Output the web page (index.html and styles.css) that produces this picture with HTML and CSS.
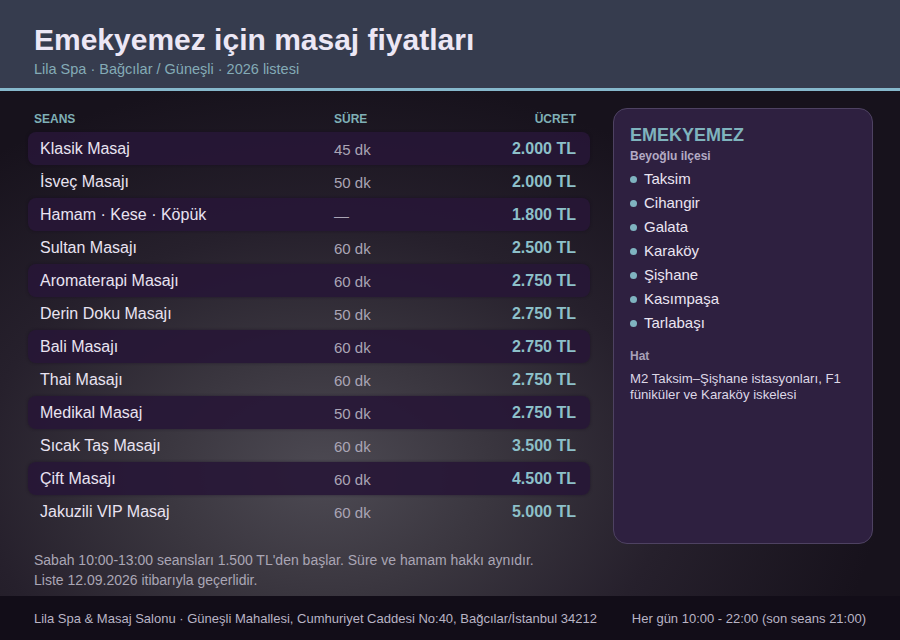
FILE: index.html
```html
<!DOCTYPE html>
<html lang="tr">
<head>
<meta charset="utf-8">
<title>Emekyemez için masaj fiyatları</title>
<link rel="stylesheet" href="styles.css">
</head>
<body>
<div class="page">
  <header class="top">
    <h1 class="title">Emekyemez için masaj fiyatları</h1>
    <div class="subtitle">Lila Spa · Bağcılar / Güneşli · 2026 listesi</div>
  </header>
  <main class="main">
    <section class="prices">
      <div class="thead">
        <span class="c-name">SEANS</span>
        <span class="c-dur">SÜRE</span>
        <span class="c-price">ÜCRET</span>
      </div>
      <div class="row alt"><span class="c-name">Klasik Masaj</span><span class="c-dur">45 dk</span><span class="c-price">2.000 TL</span></div>
      <div class="row"><span class="c-name">İsveç Masajı</span><span class="c-dur">50 dk</span><span class="c-price">2.000 TL</span></div>
      <div class="row alt"><span class="c-name">Hamam · Kese · Köpük</span><span class="c-dur">—</span><span class="c-price">1.800 TL</span></div>
      <div class="row"><span class="c-name">Sultan Masajı</span><span class="c-dur">60 dk</span><span class="c-price">2.500 TL</span></div>
      <div class="row alt"><span class="c-name">Aromaterapi Masajı</span><span class="c-dur">60 dk</span><span class="c-price">2.750 TL</span></div>
      <div class="row"><span class="c-name">Derin Doku Masajı</span><span class="c-dur">50 dk</span><span class="c-price">2.750 TL</span></div>
      <div class="row alt"><span class="c-name">Bali Masajı</span><span class="c-dur">60 dk</span><span class="c-price">2.750 TL</span></div>
      <div class="row"><span class="c-name">Thai Masajı</span><span class="c-dur">60 dk</span><span class="c-price">2.750 TL</span></div>
      <div class="row alt"><span class="c-name">Medikal Masaj</span><span class="c-dur">50 dk</span><span class="c-price">2.750 TL</span></div>
      <div class="row"><span class="c-name">Sıcak Taş Masajı</span><span class="c-dur">60 dk</span><span class="c-price">3.500 TL</span></div>
      <div class="row alt"><span class="c-name">Çift Masajı</span><span class="c-dur">60 dk</span><span class="c-price">4.500 TL</span></div>
      <div class="row"><span class="c-name">Jakuzili VIP Masaj</span><span class="c-dur">60 dk</span><span class="c-price">5.000 TL</span></div>
    </section>
    <aside class="card">
      <div class="card-title">EMEKYEMEZ</div>
      <div class="card-sub">Beyoğlu ilçesi</div>
      <ul class="areas">
        <li>Taksim</li>
        <li>Cihangir</li>
        <li>Galata</li>
        <li>Karaköy</li>
        <li>Şişhane</li>
        <li>Kasımpaşa</li>
        <li>Tarlabaşı</li>
      </ul>
      <div class="card-label">Hat</div>
      <p class="card-text">M2 Taksim–Şişhane istasyonları, F1 füniküler ve Karaköy iskelesi</p>
    </aside>
  </main>
  <div class="note">
    <div>Sabah 10:00-13:00 seansları 1.500 TL'den başlar. Süre ve hamam hakkı aynıdır.</div>
    <div>Liste 12.09.2026 itibarıyla geçerlidir.</div>
  </div>
  <footer class="foot">
    <span>Lila Spa &amp; Masaj Salonu · Güneşli Mahallesi, Cumhuriyet Caddesi No:40, Bağcılar/İstanbul 34212</span>
    <span>Her gün 10:00 - 22:00 (son seans 21:00)</span>
  </footer>
</div>
</body>
</html>
```

FILE: styles.css
```css
* { box-sizing: border-box; }
html, body { margin: 0; padding: 0; }
body {
  font-family: "Liberation Sans", Arial, sans-serif;
  width: 900px;
  height: 640px;
  overflow: hidden;
  background: #16111b;
}
.page {
  width: 900px;
  height: 640px;
  display: flex;
  flex-direction: column;
  background: radial-gradient(ellipse 62% 62% at 36% 74%, #4d4a53 0%, #3a363f 30%, #26202c 62%, #17121c 100%);
}
.top {
  background: #363c4e;
  border-bottom: 3px solid #86b8cc;
  padding: 23px 34px 10px;
}
.title {
  margin: 0;
  font-size: 30px;
  line-height: 34px;
  font-weight: bold;
  color: #ece7f5;
}
.subtitle {
  margin-top: 3px;
  font-size: 14.5px;
  line-height: 18px;
  color: #84abb6;
}
.main {
  display: grid;
  grid-template-columns: 562px 260px;
  gap: 23px;
  padding: 17px 28px 0;
}
.thead, .row {
  display: grid;
  grid-template-columns: 294px 1fr auto;
  align-items: center;
  padding: 0 14px 0 12px;
}
.thead {
  height: 21px;
  padding-top: 1px;
  margin-bottom: 3px;
  font-size: 12px;
  font-weight: bold;
  color: #7fb0b6;
  padding-left: 6px;
}
.thead .c-dur { padding-left: 6px; }
.row {
  height: 33px;
  padding-top: 1px;
  border-radius: 8px;
}
.row.alt {
  background: rgba(39, 22, 54, 0.9);
  box-shadow: 0 0 3px rgba(20, 10, 30, 0.5);
}
.row .c-name {
  font-size: 16px;
  color: #e9e3f1;
}
.row .c-dur {
  font-size: 15px;
  color: #aaa5b5;
}
.row .c-price {
  font-size: 16px;
  font-weight: bold;
  color: #8dc0c9;
  text-align: right;
}
.card {
  height: 436px;
  background: #2e2040;
  border: 1px solid #4e4262;
  border-radius: 14px;
  padding: 15px 16px;
}
.card-title {
  font-size: 18px;
  line-height: 22px;
  font-weight: bold;
  color: #7fb3bd;
}
.card-sub {
  margin-top: 2px;
  font-size: 12px;
  line-height: 16px;
  font-weight: bold;
  color: #b3abc4;
}
.areas {
  list-style: none;
  margin: 2px 0 0;
  padding: 0;
}
.areas li {
  display: flex;
  align-items: center;
  gap: 7px;
  height: 24px;
  font-size: 15px;
  color: #ebe5f2;
}
.areas li::before {
  content: "";
  width: 7px;
  height: 7px;
  border-radius: 50%;
  background: #7fb3c0;
  margin-top: 2px;
}
.card-label {
  margin-top: 14px;
  font-size: 12px;
  line-height: 16px;
  font-weight: bold;
  color: #a9a0b9;
}
.card-text {
  margin: 7px 0 0;
  font-size: 13.2px;
  line-height: 16px;
  color: #ddd7e6;
}
.note {
  padding: 6px 34px 6px;
  font-size: 14px;
  line-height: 20px;
  color: #aaa6b5;
}
.foot {
  margin-top: auto;
  height: 44px;
  background: #120d18;
  display: flex;
  justify-content: space-between;
  align-items: center;
  padding: 0 34px;
  font-size: 13px;
  color: #b9b4c5;
}
```
